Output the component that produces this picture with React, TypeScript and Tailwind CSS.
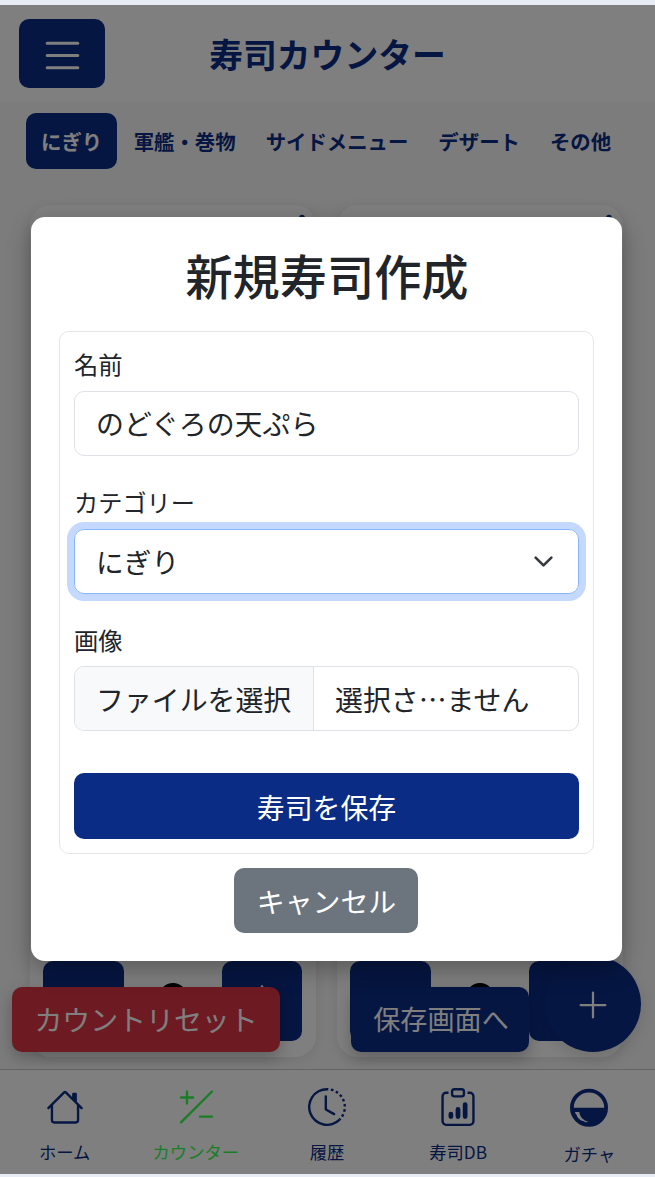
import { useState } from 'react'
import { BsClipboardData, BsClockHistory, BsHouse, BsList, BsPlusLg, BsThreeDotsVertical } from 'react-icons/bs'
import { clsx } from 'clsx'

const CATEGORIES = ['にぎり', '軍艦・巻物', 'サイドメニュー', 'デザート', 'その他']

function CounterIcon() {
  return (
    <svg width="38" height="38" viewBox="0 0 38 38" fill="none" stroke="currentColor" strokeWidth="2.4" strokeLinecap="round">
      <path d="M10 3.500v12M4 9.500h12M4 34.300 35 3.500M23 28.600h12" />
    </svg>
  )
}

function GachaIcon() {
  return (
    <svg className="overflow-visible" width="38" height="38" viewBox="0 0 38 38" fill="none">
      <circle cx="19" cy="19.7" r="17.1" stroke="currentColor" strokeWidth="3.8" />
      <path d="M2 19.700h34a17 17 0 0 1-34 0z" fill="currentColor" />
      <path d="M5 24h4.300c.5 4.500 3.700 8.500 9.300 10C12 35 6.500 31 5 24z" fill="#fff" />
      <path d="M5 26c1.500 5 5 8 9.500 8.600" stroke="currentColor" strokeWidth="2" />
    </svg>
  )
}

const NAV = [
  { label: 'ホーム', icon: <BsHouse size={38} /> },
  { label: 'カウンター', icon: <CounterIcon />, active: true },
  { label: '履歴', icon: <BsClockHistory size={38} /> },
  { label: '寿司DB', icon: <BsClipboardData size={38} /> },
  { label: 'ガチャ', icon: <GachaIcon />, low: true },
]

function SushiCard() {
  return (
    <div className="flex flex-1 flex-col justify-between rounded-[21px] bg-white pt-[7px] pr-[14px] pb-4 pl-[13px] shadow-[0_3px_12px_rgba(0,0,0,0.08)]">
      <div className="-mr-[15px] flex justify-end text-[#0b2c84]">
        <BsThreeDotsVertical size={30} />
      </div>
      <div className="flex h-20 items-center justify-between">
        <button className="h-20 w-[81px] rounded-[10px] bg-[#0b2c84]" />
        <span className="h-[36px] w-[28px] rounded-full border-[7px] border-black" />
        <button className="flex h-20 w-20 items-center justify-center rounded-[10px] bg-[#0b2c84] text-white">
          <BsPlusLg size={42} />
        </button>
      </div>
    </div>
  )
}

function CounterScreen() {
  return (
    <div className="flex h-full flex-col bg-[#f8f8f8]">
      <header className="grid h-[97px] shrink-0 grid-cols-[86px_1fr_86px] items-center bg-white pr-[19px] pl-[19px]">
        <button className="flex h-[69px] items-center justify-center rounded-[10px] bg-[#0b2c84] pt-1 text-white">
          <BsList size={49} />
        </button>
        <h1 className="text-center text-[33.8px] font-bold leading-none text-[#0b2c84]">寿司カウンター</h1>
      </header>

      <nav className="flex h-[67px] shrink-0 items-end pl-[26px] text-[20.4px] font-bold whitespace-nowrap text-[#0b2c84]">
        {CATEGORIES.map((c, i) => (
          <button
            key={c}
            className={clsx('h-14 rounded-[10px] px-[15px]', i === 0 ? 'mr-[1.5px] bg-[#0b2c84] text-white' : '')}
          >
            {c}
          </button>
        ))}
      </nav>

      <main className="flex flex-1 gap-[21px] pt-9 pr-8 pb-3 pl-[30px]">
        <SushiCard />
        <SushiCard />
      </main>

      <footer className="-ml-px grid h-[105px] shrink-0 grid-cols-5 border-t border-[#c8c8c8] bg-white">
        {NAV.map((n) => (
          <div
            key={n.label}
            className={clsx(
              'flex flex-col items-center pt-[18px] text-[17.3px]',
              n.low ? 'gap-[15px]' : 'gap-[13px]',
              n.active ? 'text-[#36fa4e]' : 'text-[#0b2c84]',
            )}
          >
            {n.icon}
            <span className="leading-[26px] whitespace-nowrap">{n.label}</span>
          </div>
        ))}
      </footer>

      {/* floating actions above the bottom bar */}
      <button className="absolute bottom-[122px] left-3 h-[65px] w-[268px] rounded-[10px] bg-[#dc3545] text-[27.9px] text-white shadow-[0_6px_16px_rgba(0,0,0,0.25)]">
        カウントリセット
      </button>
      <button className="absolute bottom-[122px] left-[351px] h-[65px] w-[178px] rounded-[10px] bg-[#0b2c84] pl-[2px] text-[27.1px] text-white shadow-[0_6px_16px_rgba(0,0,0,0.25)]">
        保存画面へ
      </button>
      <button className="absolute right-3.5 bottom-[122px] flex h-24 w-24 items-center justify-center rounded-full bg-[#0b2c84] pt-[2px] text-white shadow-[0_6px_16px_rgba(0,0,0,0.12)]">
        <BsPlusLg size={36} />
      </button>
    </div>
  )
}

function CreateSushiModal() {
  const [name, setName] = useState('のどぐろの天ぷら')

  return (
    <div className="flex h-[744px] w-[591px] flex-col items-center rounded-[14px] bg-white px-7 pt-[23px] text-[#212529] shadow-[0_8px_24px_rgba(0,0,0,0.3)]">
      <h2 className="pl-px text-[47.2px] font-medium leading-[70px]">新規寿司作成</h2>

      <div className="mt-[21px] flex h-[523px] w-full flex-col rounded-[10px] border border-[#e4e7ea] px-[14px] pt-[14px]">
        <label className="text-[24.3px] leading-[36px]">名前</label>
        <input
          className="mt-[9px] h-[65px] shrink-0 rounded-[10px] border border-[#dee2e6] bg-white px-[21px] pb-[2px] text-[27.9px] outline-none"
          value={name}
          onChange={(e) => setName(e.target.value)}
        />

        <label className="mt-[28px] text-[24.2px] leading-[36px]">カテゴリー</label>
        <div className="mt-[9px] flex h-[65px] shrink-0 items-center justify-between rounded-[10px] border border-[#86b7fe] px-[21px] text-[27.7px] shadow-[0_0_0_7px_#c5d9fe]">
          <span>にぎり</span>
          <svg className="mr-[3px]" width="21" height="21" viewBox="0 0 16 16" fill="none" stroke="#343a40" strokeWidth="2" strokeLinecap="round" strokeLinejoin="round">
            <path d="m2 5 6 6 6-6" />
          </svg>
        </div>

        <label className="mt-[28px] text-[24.3px] leading-[36px]">画像</label>
        <div className="mt-2 flex h-[65px] shrink-0 items-center overflow-hidden rounded-[10px] border border-[#dee2e6] text-[27.9px]">
          <span className="flex h-full w-[239px] items-center border-r border-[#dee2e6] bg-[#f8f9fa] pt-[2px] pl-[21px]">
            ファイルを選択
          </span>
          <span className="pt-[2px] pl-[21px]">選択さ…ません</span>
        </div>

        <button className="mt-[42px] h-[66px] shrink-0 rounded-[10px] bg-[#0b2c84] pt-[4px] text-[27.9px] text-white">
          寿司を保存
        </button>
      </div>

      <button className="mt-[14px] mr-[2px] h-[65px] w-[184px] shrink-0 rounded-[10px] bg-[#6c757d] pt-[2px] pl-[2px] text-[27.9px] text-white">
        キャンセル
      </button>
    </div>
  )
}

export default function App() {
  return (
    <div
      lang="ja"
      className="h-[1177px] w-[655px] overflow-hidden bg-[#e8ecf4] pt-[5px] pb-[3px] font-['Noto_Sans_CJK_JP',sans-serif]"
    >
      <div className="relative h-full overflow-hidden">
        <CounterScreen />
        <div className="absolute inset-0 flex justify-center bg-black/50 pt-[212px] pr-[2px]">
          <CreateSushiModal />
        </div>
      </div>
    </div>
  )
}
